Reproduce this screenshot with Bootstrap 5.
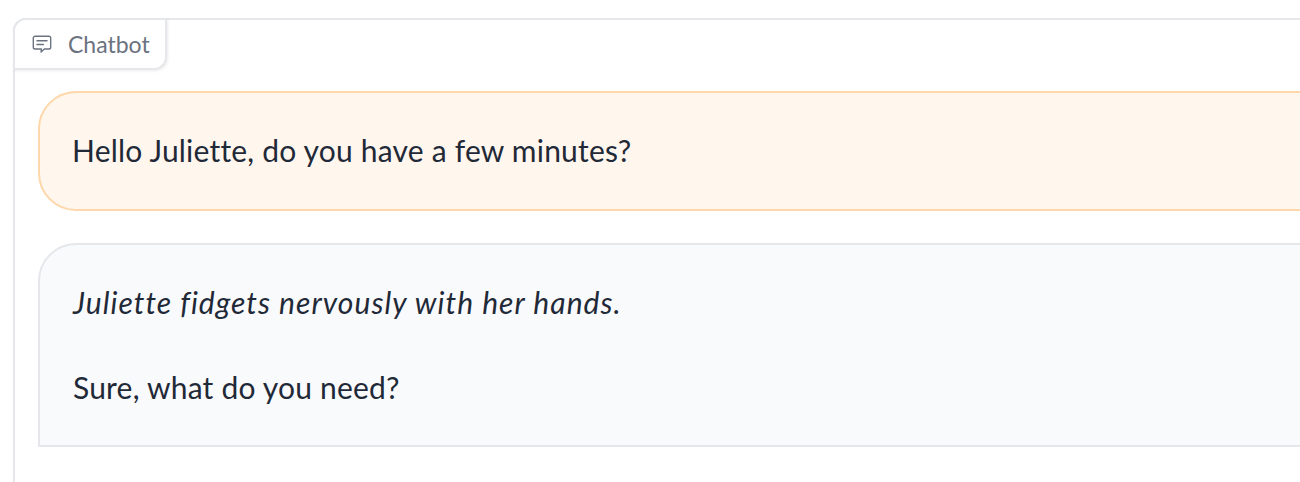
<!DOCTYPE html>
<html lang="en"><head><meta charset="utf-8"><title>Chatbot</title>
<link href="https://cdn.jsdelivr.net/npm/bootstrap@5.3.0/dist/css/bootstrap.min.css" rel="stylesheet">
<style>
html,body{height:482px;overflow:hidden;background:#fff}
body{font-family:Lato,"Noto Sans",sans-serif;color:#1f2937;font-variant-ligatures:none}
.shell{margin:18px -40px 0 13px;height:464px;border:2px solid #e5e7eb;border-bottom:0;border-radius:13px 0 0 0;position:relative;padding:71px 0 0 23px}
.tag{position:absolute;left:-2px;top:-2px;height:52px;width:154px;border:2px solid #e5e7eb;border-radius:13px 0 13px 0;background:#fff;color:#6b7280;font-size:23px;gap:15px;padding-left:16px;box-shadow:1px 1px 3px rgba(0,0,0,.08)}
.tag svg{width:22px;height:22px}
.msg{font-size:30px;line-height:1.25;padding:0 32px;letter-spacing:.2px}
.mine{height:120px;background:#fff6ed;border:2px solid #fed7aa;border-radius:38px 0 0 38px;margin-bottom:32px}
.other{height:204px;background:#f9fafb;border:2px solid #e5e7eb;border-radius:38px 0 0 0;padding:39px 33px 0}
.other p{margin:0 0 47px}
.other em{letter-spacing:1.05px}
</style></head><body>
<div class="shell">
<div class="tag d-flex align-items-center"><svg viewBox="0 0 24 24" fill="none" stroke="currentColor" stroke-width="1.5" stroke-linejoin="round" stroke-linecap="round"><path d="M4.5 3.5h15a2 2 0 0 1 2 2v10a2 2 0 0 1-2 2h-5l-3.5 3.2.3-3.2H4.500a2 2 0 0 1-2-2v-10a2 2 0 0 1 2-2z"/><path d="M6.500 8.500h11M6.500 12.500h7"/></svg><span>Chatbot</span></div>
<div class="msg mine d-flex align-items-center">Hello Juliette, do you have a few minutes?</div>
<div class="msg other"><p><em>Juliette fidgets nervously with her hands.</em></p><p>Sure, what do you need?</p></div>
</div>
<script src="https://cdn.jsdelivr.net/npm/bootstrap@5.3.0/dist/js/bootstrap.bundle.min.js"></script>
</body></html>
